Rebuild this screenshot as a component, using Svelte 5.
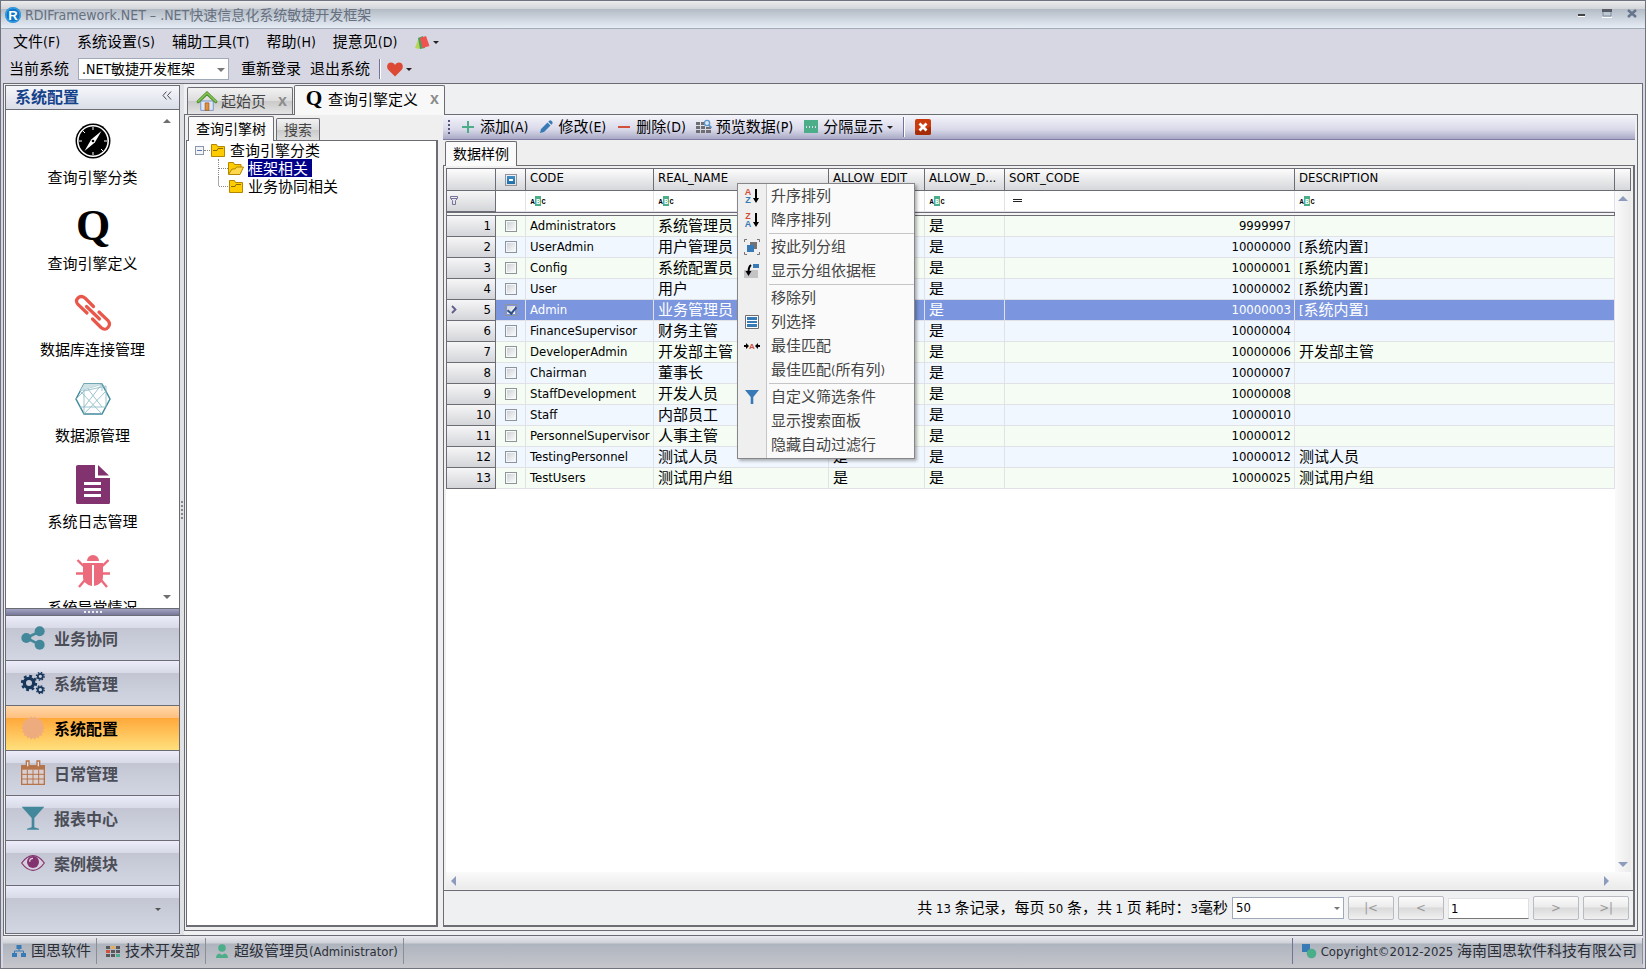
<script>
  const menus = ["文件(F)", "系统设置(S)", "辅助工具(T)", "帮助(H)", "提意见(D)"];

  const shortcuts = [
    { icon: "compass", label: "查询引擎分类" },
    { icon: "q", label: "查询引擎定义" },
    { icon: "link", label: "数据库连接管理" },
    { icon: "hexagon", label: "数据源管理" },
    { icon: "file", label: "系统日志管理" },
    { icon: "bug", label: "系统异常情况" }
  ];

  const modules = [
    { icon: "share", label: "业务协同" },
    { icon: "gears", label: "系统管理" },
    { icon: "badge", label: "系统配置" },
    { icon: "calendar", label: "日常管理" },
    { icon: "glass", label: "报表中心" },
    { icon: "eye", label: "案例模块" }
  ];

  const actions = [
    { icon: "plus", label: "添加(A)" },
    { icon: "pencil", label: "修改(E)" },
    { icon: "minus", label: "删除(D)" },
    { icon: "preview", label: "预览数据(P)" },
    { icon: "split", label: "分隔显示", caret: true }
  ];

  // no width: the column takes what is left
  const columns = [
    { label: "CODE", width: 128, filter: "abc" },
    { label: "REAL_NAME", width: 175, filter: "abc" },
    { label: "ALLOW_EDIT", width: 96, filter: "abc" },
    { label: "ALLOW_D...", width: 80, filter: "abc" },
    { label: "SORT_CODE", width: 290, filter: "eq" },
    { label: "DESCRIPTION", filter: "abc" }
  ];

  const rows = [
    ["Administrators", "系统管理员", "是", "是", "9999997", ""],
    ["UserAdmin", "用户管理员", "是", "是", "10000000", "[系统内置]"],
    ["Config", "系统配置员", "是", "是", "10000001", "[系统内置]"],
    ["User", "用户", "是", "是", "10000002", "[系统内置]"],
    ["Admin", "业务管理员", "是", "是", "10000003", "[系统内置]"],
    ["FinanceSupervisor", "财务主管", "是", "是", "10000004", ""],
    ["DeveloperAdmin", "开发部主管", "是", "是", "10000006", "开发部主管"],
    ["Chairman", "董事长", "是", "是", "10000007", ""],
    ["StaffDevelopment", "开发人员", "是", "是", "10000008", ""],
    ["Staff", "内部员工", "是", "是", "10000010", ""],
    ["PersonnelSupervisor", "人事主管", "是", "是", "10000012", ""],
    ["TestingPersonnel", "测试人员", "是", "是", "10000012", "测试人员"],
    ["TestUsers", "测试用户组", "是", "是", "10000025", "测试用户组"]
  ];

  const menuGroups = [
    [{ icon: "az", label: "升序排列" }, { icon: "za", label: "降序排列" }],
    [{ icon: "group", label: "按此列分组" }, { icon: "groupbox", label: "显示分组依据框" }],
    [
      { label: "移除列" },
      { icon: "columns", label: "列选择" },
      { icon: "fit", label: "最佳匹配" },
      { label: "最佳匹配(所有列)" }
    ],
    [{ icon: "funnel", label: "自定义筛选条件" }, { label: "显示搜索面板" }, { label: "隐藏自动过滤行" }]
  ];

  let activeModule = $state(2);
  let current = $state(4);
  let checked = $state(rows.map((r, i) => i === 4));

  // Chinese runs are set larger than the Latin ones
  const runs = (s) => s.split(/([\u3000-\u9fff\uff00-\uffef]+)/).filter(Boolean);
  const isHan = (s) => /[\u3000-\u9fff\uff00-\uffef]/.test(s);

  // zigzag outline of the badge icon
  const star = Array.from({ length: 36 }, (_, i) => {
    const r = i % 2 ? 14.5 : 18;
    const a = (i * Math.PI) / 18;
    return `${(18 + r * Math.cos(a)).toFixed(1)},${(18 + r * Math.sin(a)).toFixed(1)}`;
  }).join(" ");
</script>

{#snippet text(s)}{#each runs(s) as r}{#if isHan(r)}<span class="han">{r}</span>{:else}{r}{/if}{/each}{/snippet}

{#snippet icon(name, size = 16)}
  <svg class="icon" width={size} height={size} viewBox={size > 16 ? "0 0 36 36" : "0 0 16 16"} aria-hidden="true">
    {#if name === "logo"}
      <circle cx="8" cy="8" r="8" fill="#1488d8" />
      <circle cx="8" cy="8" r="7" fill="#0f76c8" stroke="#5cc0f5" stroke-width=".6" />
      <text x="8" y="12.500" class="bold" font-size="13" text-anchor="middle" fill="#fff">R</text>
    {:else if name === "cards"}
      <path d="M1 14 5 3l5 10-4 2z" fill="#b8d653" />
      <path d="M4 4 9 2l2 12-5 1z" fill="#4b9e5e" />
      <path d="m6 4 6-2 3.500 10-7 2z" fill="#ef5350" />
    {:else if name === "heart"}
      <path d="M8 15.500 1 8.500C-1 5 .8 1.500 4 1.500 6 1.500 7.300 2.600 8 4c.7-1.400 2-2.500 4-2.500 3.200 0 5 3.500 3 7z" fill="#dc4a35" />
    {:else if name === "home"}
      <path d="M3 8h10v7.500H3z" fill="#dde6f6" stroke="#7b97cc" stroke-width=".8" />
      <path d="M6.500 9.500h3v6h-3z" fill="#e0903c" stroke="#a35a16" stroke-width=".6" />
      <path d="M1 8.500 8 1.800l7 6.700" fill="none" stroke="#4d8a2c" stroke-width="2.600" stroke-linecap="round" />
      <path d="M1 8.300 8 1.600l7 6.700" fill="none" stroke="#86c653" stroke-width="1.200" stroke-linecap="round" />
    {:else if name === "q"}
      <text x={size > 16 ? 18 : 8} y={size > 16 ? 31 : 13} class="serif" font-size={size > 16 ? 44 : 17} text-anchor="middle">Q</text>
    {:else if name === "compass"}
      <circle cx="18" cy="18" r="17.500" />
      <circle cx="18" cy="18" r="15.200" fill="none" stroke="#fff" stroke-width="1.600" />
      <path d="M18 4v3M18 29v3M4 18h3M29 18h3M8 8l2 2M26 26l2 2" stroke="#fff" stroke-width="1" />
      <path d="m26.500 8-6.700 11.500L9.500 28l6.700-11.500z" fill="#fff" />
      <circle cx="18" cy="18" r="1.300" />
    {:else if name === "link"}
      <g fill="none" stroke="#e8574a" stroke-width="3.200" stroke-linecap="round">
        <path d="m12 18-9-8.500Q0 6 3 3t7 0l8.500 8.500" />
        <path d="m24 17 9 8.500q3 3.500 0 7t-7 0L17.500 24" />
        <path d="m11.500 11.500 13 12.500" />
      </g>
    {:else if name === "hexagon"}
      <path d="M1 18 9 3h18l8 15-8 15H9z" fill="none" stroke="#438b9c" stroke-width="1.500" />
      <path d="M9 3 27 26M27 3 9 26M5 10l22 23M31 10 9 33M9 3v30M27 3 5 10M9 10l22-5M31 5v21M5 26h26M1 18 9 10M27 3v7" fill="none" stroke="#86b6c1" stroke-width=".8" />
      <path d="M9 3h18L5 10z" fill="#cfe2e6" />
    {:else if name === "file"}
      <path d="M3-2h17v13h15v24.500q0 1.500-1.500 1.500h-31Q1 37 1 35.500v-36Q1-2 3-2" fill="#82336f" />
      <path d="M23-2V8.500h11z" fill="#82336f" />
      <path d="M9 15h17v3H9zM9 21h17v3H9zM9 27h17v3H9z" fill="#fff" />
    {:else if name === "bug"}
      <path d="M12 8a6 6 0 0 1 12 0z" fill="#eb6a7c" />
      <path d="M8 10h20v14c0 5-4 8-9 9V12h-2v21c-5-1-9-4-9-9z" fill="#eb6a7c" />
      <path d="m2.500 7 6 6M33.500 7l-6 6M1 20.500h7M35 20.500h-7M4 34l5.500-6.500M32 34l-5.500-6.500" stroke="#eb6a7c" stroke-width="2.400" />
    {:else if name === "share"}
      <path d="M28 8 8 18l20 10" fill="none" stroke="#43889a" stroke-width="4" />
      <circle cx="28" cy="8" r="7.500" fill="#43889a" />
      <circle cx="8" cy="18" r="7.500" fill="#43889a" />
      <circle cx="28" cy="28" r="7.500" fill="#43889a" />
    {:else if name === "gears"}
      <g fill="none" stroke="#16365c">
        <circle cx="12" cy="18" r="7" stroke-width="5" />
        <circle cx="12" cy="18" r="10.500" stroke-width="3.500" stroke-dasharray="4.200 4.050" />
        <circle cx="29" cy="8" r="3.800" stroke-width="2.600" />
        <circle cx="29" cy="8" r="5.800" stroke-width="2" stroke-dasharray="2.300 2.250" />
        <circle cx="29" cy="28" r="3.800" stroke-width="2.600" />
        <circle cx="29" cy="28" r="5.800" stroke-width="2" stroke-dasharray="2.300 2.250" />
      </g>
    {:else if name === "badge"}
      <polygon points={star} fill="#eeac7e" />
    {:else if name === "calendar"}
      <path d="M1 7h34v28H1z" fill="#d9cfd0" stroke="#b6744a" stroke-width="2" />
      <path d="M1 6h34v7H1z" fill="#b6744a" />
      <path d="M8 0h4v9H8zM24 0h4v9h-4z" fill="#e8e2e6" stroke="#b6744a" stroke-width="2" />
      <path d="M1 20h34M1 27h34M9.500 13v22M18 13v22M26.500 13v22" stroke="#b6744a" stroke-width="1.500" />
    {:else if name === "glass"}
      <path d="M1 1h34L20 18v14l7 2v1.500H9V34l7-2V18z" fill="#43889a" />
    {:else if name === "eye"}
      <path d="M1 18Q9 7 18 7t17 11Q27 29 18 29T1 18z" fill="#d8cfdd" stroke="#82336f" stroke-width="1.800" />
      <circle cx="18" cy="16.500" r="9" fill="#82336f" />
      <path d="M13 16q0-5 5-5" fill="none" stroke="#e3cfe0" stroke-width="2" />
    {:else if name === "plus"}
      <path d="M7 2h2v5h5v2H9v5H7V9H2V7h5z" fill="#4cae89" />
    {:else if name === "pencil"}
      <path d="m2 14 1-4 6.500-6.500 3 3L6 13zM10.300 2.700l1-1q1-.7 2 0l1 1q.7 1 0 2l-1 1z" fill="#377ab5" />
    {:else if name === "minus"}
      <path d="M2 7h12v2H2z" fill="#d1503a" />
    {:else if name === "preview"}
      <path d="M0 3h4v3H0zM5 3h4v3H5zM0 7h4v3H0zM5 7h4v3H5zM10 8h5v2h-5zM0 11h4v3H0zM5 11h4v3H5zM10 11h5v3h-5z" fill="#6d6d72" />
      <circle cx="11" cy="4" r="2.600" fill="#dfe9f5" stroke="#5b93c8" stroke-width="1.400" />
      <path d="m12.800 6 2.700 2.800" stroke="#5b93c8" stroke-width="1.800" />
    {:else if name === "split"}
      <path d="M1 1h14v6H1zM1 9h14v5H1z" fill="#4cae89" />
      <path d="M1 8h14" stroke="#4cae89" stroke-width="2" stroke-dasharray="2 1" />
    {:else if name === "close"}
      <rect width="16" height="16" rx="2" fill="#c93a0d" />
      <path d="M0 12 16 8v6q0 2-2 2H2q-2 0-2-2z" fill="#a52c04" />
      <path d="m4.500 4.500 7 7m0-7-7 7" stroke="#fff" stroke-width="2.800" />
    {:else if name === "folder"}
      <path d="M1.500 2.500h5l1 2h7v10h-13z" fill="#fc0" stroke="#b48600" />
      <path d="M3 8.500h4l1-2h5" fill="none" stroke="#8f6c00" />
    {:else if name === "folder-open"}
      <path d="M.5 14V2.500h5l1 2H13V7" fill="#fc0" stroke="#b48600" />
      <path d="M.5 14.500 4 9h3l1.500-2H15.500L12 14.500z" fill="#ffd84d" stroke="#b48600" />
    {:else if name === "az" || name === "za"}
      <text x="4" y="7" class="bold" font-size="9" text-anchor="middle" fill="#d1503a">{name === "az" ? "A" : "Z"}</text>
      <text x="4" y="15" class="bold" font-size="9" text-anchor="middle" fill="#377ab5">{name === "az" ? "Z" : "A"}</text>
      <path d="M11 1h2v9h2l-3 5-3-5h2z" />
    {:else if name === "group"}
      <path d="M3 .5H.5V3M13 .5h2.500V3M3 15.500H.5V13M13 15.500h2.500V13" fill="none" stroke="#727277" />
      <path d="M6 3h7v7H6z" fill="#727277" />
      <path d="M3 6h7v7H3z" fill="#377ab5" />
    {:else if name === "groupbox"}
      <path d="M0 7h14v8H0z" fill="#c4c4c6" />
      <path d="M9 1h6v4H9z" fill="#377ab5" />
      <path d="M7 2Q4.500 4 4.500 9" fill="none" stroke="#000" stroke-width="2" />
      <path d="M1.500 8h6l-3 5z" />
    {:else if name === "columns"}
      <path d="M1.500 1.500h13v13h-13z" fill="#fff" stroke="#6d6d72" />
      <path d="M3 3h10v3H3zM3 7h10v2H3zM3 10h10v3H3z" fill="#377ab5" />
    {:else if name === "fit"}
      <text x="8" y="11" class="bold" font-size="8" text-anchor="middle" fill="#d1503a">A</text>
      <path d="M0 7h2V5l3 3-3 3V9H0zM16 7h-2V5l-3 3 3 3V9h2z" />
    {:else if name === "funnel"}
      <path d="M1 1h14L9.300 8v7H6.700V8z" fill="#377ab5" />
    {:else if name === "filter"}
      <path d="M3.500 3.500h7v2l-2 2v4h-3v-4l-2-2zM4 5.500h6" fill="none" stroke="#77739b" />
    {:else if name === "abc"}
      <path d="M5 3h6v10H5z" fill="#4cae89" />
      <text x="2.500" y="10.500" class="mono" font-size="7" text-anchor="middle">A</text>
      <text x="8" y="10.500" class="mono" font-size="7" text-anchor="middle" fill="#fff">B</text>
      <text x="13.500" y="10.500" class="mono" font-size="7" text-anchor="middle">C</text>
    {:else if name === "eq"}
      <path d="M4 6h9v1H4zM4 8h9v1H4z" fill="#222" />
    {:else if name === "org"}
      <path d="M5.500 2h5v4h-5zM1 10h5v4H1zM10 10h5v4h-5z" fill="#377ab5" />
      <path d="M8 6v2M3.500 10V8h9v2" fill="none" stroke="#377ab5" />
    {:else if name === "tiles"}
      <path d="M1 3h4v3H1zM11 3h4v3h-4zM6 7h4v3H6zM11 7h4v3h-4zM1 11h4v3H1zM6 11h4v3H6z" fill="#57575c" />
      <path d="M6 3h4v3H6z" fill="#e9ad53" />
      <path d="M1 7h4v3H1z" fill="#d1503a" />
      <path d="M11 11h4v3h-4z" fill="#4cae89" />
    {:else if name === "user"}
      <circle cx="8" cy="5" r="3.800" fill="#4cae89" />
      <path d="M2 15q0-4 3.500-4.500L8 12l2.500-1.500Q14 11 14 15z" fill="#4cae89" />
    {:else if name === "mark"}
      <path d="M1 1h8v8H1z" fill="#377ab5" />
      <circle cx="10.500" cy="10.500" r="4.800" fill="#4cae89" />
    {/if}
  </svg>
{/snippet}

<div class="window">
  <header class="titlebar">
    {@render icon("logo")}
    <h1>{@render text("RDIFramework.NET – .NET快速信息化系统敏捷开发框架")}</h1>
    <div class="window-buttons">
      <button aria-label="最小化"><svg width="10" height="10"><path d="M1 5h7v2H1z" fill="#444" /><path d="M1 7h7v1H1z" fill="#fff" /></svg></button>
      <button aria-label="最大化"><svg width="10" height="10"><path d="M1 1h8v6H1z" fill="none" stroke="#7d8ca3" /><path d="M0 0h10v3H0z" fill="#555a66" /><path d="M0 8h10v1H0z" fill="#fff" /></svg></button>
      <button aria-label="关闭"><svg width="10" height="10"><path d="m1 1 8 7m0-7-8 7" stroke="#66748c" stroke-width="2.500" /></svg></button>
    </div>
  </header>

  <nav class="menubar">
    {#each menus as m}
      <button>{@render text(m)}</button>
    {/each}
    <button class="drop" aria-label="皮肤">{@render icon("cards")}<i class="caret"></i></button>
  </nav>

  <div class="mainbar">
    <label for="system">{@render text("当前系统")}</label>
    <div class="combo system">
      <select id="system"><option>.NET敏捷开发框架</option></select>
    </div>
    <button>{@render text("重新登录")}</button>
    <button>{@render text("退出系统")}</button>
    <div class="extras">
      <span class="rule"></span>
      <button class="drop" aria-label="收藏">{@render icon("heart")}<i class="caret"></i></button>
    </div>
  </div>

  <div class="work">
    <aside class="sidebar">
      <div class="side-head">
        <h2>系统配置</h2>
        <button aria-label="折叠">
          <svg width="10" height="9"><path d="M4.500 .5 1 4.500l3.500 4M9 .5 5.500 4.500 9 8.500" fill="none" stroke="#4a4a55" /></svg>
        </button>
      </div>
      <div class="shortcuts">
        {#each shortcuts as s}
          <button class="shortcut">
            {@render icon(s.icon, 36)}
            <span class="han">{s.label}</span>
          </button>
        {/each}
        <button class="scroll-up" aria-label="向上滚动"><i class="tri up"></i></button>
        <button class="scroll-down" aria-label="向下滚动"><i class="tri down"></i></button>
      </div>
      <div class="side-grip"><i></i><i></i><i></i><i></i><i></i></div>
      {#each modules as m, i}
        <button class="module" class:active={i === activeModule} onclick={() => (activeModule = i)}>
          {@render icon(m.icon, 24)}
          {m.label}
        </button>
      {/each}
      <div class="side-foot"><button aria-label="配置按钮"><i class="caret"></i></button></div>
    </aside>

    <div class="splitter"><i></i><i></i><i></i><i></i><i></i></div>

    <main class="documents">
      <div class="tabs">
        <div class="tab">{@render icon("home", 16)}<span class="han">起始页</span><button aria-label="关闭起始页">x</button></div>
        <div class="tab active">{@render icon("q", 16)}<span class="han">查询引擎定义</span><button aria-label="关闭查询引擎定义">x</button></div>
      </div>

      <div class="pane">
        <section class="tree-side">
          <div class="subtabs">
            <button class="active">查询引擎树</button>
            <button>搜索</button>
          </div>
          <ul class="tree">
            <li>
              <div class="node"><button class="expander" aria-label="折叠"></button><i class="stub"></i>{@render icon("folder")}<span class="han">查询引擎分类</span></div>
              <ul>
                <li class="node"><i class="stub"></i>{@render icon("folder-open")}<span class="han selected">框架相关</span></li>
                <li class="node"><i class="stub"></i>{@render icon("folder")}<span class="han">业务协同相关</span></li>
              </ul>
            </li>
          </ul>
        </section>

        <section class="data-side">
          <div class="toolbar">
            <span class="grip"></span>
            {#each actions as a}
              <button>{@render icon(a.icon)}<span>{@render text(a.label)}</span>{#if a.caret}<i class="caret"></i>{/if}</button>
            {/each}
            <span class="rule"></span>
            <button aria-label="关闭">{@render icon("close")}</button>
          </div>
          <div class="subtabs"><button class="active">数据样例</button></div>

          <div class="frame">
            <div class="grid">
              <div class="table-wrap">
                <table>
                  <colgroup>
                    <col class="col-num" />
                    <col class="col-check" />
                    {#each columns as c}
                      <col style={c.width ? `width: ${c.width}px` : ""} />
                    {/each}
                  </colgroup>
                  <thead>
                    <tr>
                      <th></th>
                      <th class="check"><input type="checkbox" class="all" aria-label="全选" /></th>
                      {#each columns as c}
                        <th>{c.label}</th>
                      {/each}
                    </tr>
                    <tr class="filters">
                      <td class="num">{@render icon("filter")}</td>
                      <td></td>
                      {#each columns as c}
                        <td>{@render icon(c.filter)}</td>
                      {/each}
                    </tr>
                    <tr class="divider"><td colspan="8"></td></tr>
                  </thead>
                  <tbody>
                    {#each rows as row, i}
                      <tr class:current={i === current} onclick={() => (current = i)}>
                        <td class="num">
                          {#if i === current}<svg width="6" height="9"><path d="m1 1 3.500 3.500L1 8" fill="none" stroke="#5f5b8a" stroke-width="1.800" /></svg>{/if}{i + 1}
                        </td>
                        <td class="check"><input type="checkbox" bind:checked={checked[i]} aria-label={row[0]} /></td>
                        {#each row as cell, j}
                          <td class:right={j === 4}>{@render text(cell)}</td>
                        {/each}
                      </tr>
                    {/each}
                  </tbody>
                </table>

                <div class="context-menu" role="menu">
                  {#each menuGroups as group, g}
                    {#if g > 0}<div class="sep"></div>{/if}
                    {#each group as item}
                      <button role="menuitem">
                        <span class="slot">{#if item.icon}{@render icon(item.icon)}{/if}</span>
                        <span>{@render text(item.label)}</span>
                      </button>
                    {/each}
                  {/each}
                </div>
              </div>
              <div class="vscroll">
                <span class="cap"></span>
                <div class="track"><i class="tri up"></i><i class="tri down"></i></div>
              </div>
            </div>
            <div class="hscroll"><i class="tri left"></i><i class="tri right-arrow"></i></div>

            <div class="pager">
              <label for="page-size">{@render text("共 13 条记录，每页 50 条，共 1 页 耗时：3毫秒")}</label>
              <div class="combo size">
                <select id="page-size"><option>50</option></select>
              </div>
              <button>|&lt;</button>
              <button>&lt;</button>
              <input type="text" value="1" aria-label="页码" />
              <button>&gt;</button>
              <button>&gt;|</button>
            </div>
          </div>
        </section>
      </div>
    </main>
  </div>

  <footer class="statusbar">
    <span class="status">{@render icon("org")}<span>{@render text("国思软件")}</span></span>
    <span class="status">{@render icon("tiles")}<span>{@render text("技术开发部")}</span></span>
    <span class="status">{@render icon("user")}<span>{@render text("超级管理员(Administrator)")}</span></span>
    <span class="status copyright">{@render icon("mark")}<span>{@render text("Copyright©2012-2025 海南国思软件科技有限公司")}</span></span>
  </footer>
</div>

<style>
  :global(body) {
    margin: 0;
  }

  .window {
    --line: #6b6c74;
    --ui: "DejaVu Sans Condensed", "Noto Sans CJK SC", sans-serif;
    box-sizing: border-box;
    height: 100vh;
    display: flex;
    flex-direction: column;
    border: 1px solid #6f7380;
    background: #d7d7e4;
    font: 13px/20px var(--ui);
    color: #000;
    overflow: hidden;
  }

  .window :global(*) {
    box-sizing: border-box;
  }

  button {
    font: inherit;
    color: inherit;
    margin: 0;
    padding: 0;
    border: 0;
    background: none;
    white-space: nowrap;
  }

  .han {
    font: 15px/18px "Noto Sans CJK SC", sans-serif;
  }

  .icon {
    flex: none;
    display: block;
    overflow: visible;
  }

  .bold {
    font-family: "Liberation Sans", sans-serif;
    font-weight: bold;
  }

  .mono {
    font-family: "Liberation Mono", monospace;
    font-weight: bold;
  }

  .serif {
    font-family: "Liberation Serif", serif;
    font-weight: bold;
  }

  .caret {
    width: 0;
    border: 3px solid transparent;
    border-top-color: #222;
    border-bottom: 0;
  }

  .tri {
    width: 0;
    height: 0;
    border: 5px solid transparent;
  }

  .tri.up {
    border-top: 0;
    border-bottom-color: #8d9cbd;
  }

  .tri.down {
    border-bottom: 0;
    border-top-color: #8d9cbd;
  }

  .tri.left {
    border-left: 0;
    border-right-color: #8d9cbd;
  }

  .tri.right-arrow {
    border-right: 0;
    border-left-color: #8d9cbd;
  }

  .rule {
    width: 2px;
    height: 20px;
    border-left: 1px solid #73739a;
    border-right: 1px solid #fff;
  }

  /* title and menus */
  .titlebar {
    flex: none;
    height: 28px;
    display: flex;
    align-items: center;
    gap: 4px;
    padding: 0 8px 0 4px;
    border-bottom: 1px solid #a3abb8;
    background: linear-gradient(#ececee, #d2d4d8 8px, #b3bbc6 8px, #e6edf5);
  }

  h1 {
    flex: 1;
    margin: 0;
    font-size: 14px;
    font-weight: normal;
    color: #66707f;
  }

  h1 .han {
    font-size: 14px;
  }

  .window-buttons {
    display: flex;
    gap: 15px;
  }

  .menubar {
    flex: none;
    height: 26px;
    display: flex;
    align-items: center;
    gap: 17px;
    padding-left: 12px;
    font-size: 14px;
  }

  .drop {
    display: flex;
    align-items: center;
    gap: 3px;
  }

  .mainbar {
    flex: none;
    height: 28px;
    display: flex;
    align-items: center;
    gap: 9px;
    padding-left: 8px;
  }

  .extras {
    display: flex;
    align-items: center;
    gap: 6px;
  }

  .combo {
    position: relative;
  }

  .combo::after {
    content: "";
    position: absolute;
    right: 4px;
    top: 10px;
    border: 4px solid transparent;
    border-top-color: #777;
    border-bottom: 0;
    pointer-events: none;
  }

  select {
    appearance: none;
    width: 100%;
    height: 22px;
    padding: 0 3px;
    border: 1px solid #a0a9b8;
    border-radius: 0;
    background: #fff;
    color: #000;
    font: 13px/20px var(--ui);
  }

  .system {
    width: 151px;
    margin-right: 3px;
  }

  .system select {
    font-size: 14px;
  }

  /* left side */
  .work {
    flex: 1;
    min-height: 0;
    display: flex;
    margin: 0 2px;
    border: 1px solid var(--line);
    background: #eff0f2;
  }

  .sidebar {
    flex: none;
    width: 175px;
    display: flex;
    flex-direction: column;
    margin: 1px 0 1px 1px;
    border: 1px solid var(--line);
    background: #fff;
  }

  .side-head {
    flex: none;
    height: 24px;
    display: flex;
    align-items: center;
    justify-content: space-between;
    padding: 0 7px 3px 9px;
    border-bottom: 1px solid var(--line);
    background: linear-gradient(#f6f7fb, #dadee8);
  }

  h2 {
    margin: 0;
    font: bold 16px/20px "Noto Sans CJK SC", sans-serif;
    color: #15428b;
  }

  .shortcuts {
    position: relative;
    flex: 1;
    min-height: 0;
    overflow: hidden;
    padding-top: 13px;
  }

  .shortcut {
    width: 100%;
    height: 86px;
    display: flex;
    flex-direction: column;
    align-items: center;
    gap: 9px;
  }

  .scroll-up,
  .scroll-down {
    position: absolute;
    right: 8px;
    display: flex;
  }

  .scroll-up {
    top: 9px;
  }

  .scroll-down {
    bottom: 9px;
  }

  .shortcuts .tri {
    border-width: 4px;
  }

  .shortcuts .up {
    border-top: 0;
    border-bottom-color: #6d6d72;
  }

  .shortcuts .down {
    border-bottom: 0;
    border-top-color: #6d6d72;
  }

  .side-grip {
    flex: none;
    height: 7px;
    display: flex;
    align-items: center;
    justify-content: center;
    gap: 2px;
    border-top: 1px solid var(--line);
    background: linear-gradient(#a3a3c2, #77779b);
  }

  .side-grip i {
    width: 2px;
    height: 2px;
    background: #eee;
  }

  .module,
  .side-foot {
    flex: none;
    height: 45px;
    display: flex;
    align-items: center;
    gap: 9px;
    padding-left: 15px;
    border-top: 1px solid var(--line);
    background: linear-gradient(#ececfa, #d8dae7 12px, #c3c5d2 12px, #d2d6e3);
    font: bold 16px/20px "Noto Sans CJK SC", sans-serif;
    color: #4b4d57;
  }

  .module.active {
    background: linear-gradient(#ffd7a6, #ffc080 12px, #ffa83a 12px, #ffe07c);
    color: #000;
  }

  .side-foot {
    height: 48px;
    justify-content: flex-end;
    padding-right: 18px;
  }

  .side-foot button {
    display: flex;
  }

  .side-foot .caret {
    border-top-color: #555;
  }

  .splitter {
    flex: none;
    width: 4px;
    display: flex;
    flex-direction: column;
    align-items: center;
    justify-content: center;
    gap: 2px;
    background: #e1e2e6;
  }

  .splitter i {
    width: 2px;
    height: 2px;
    background: #888;
  }

  /* documents */
  .documents {
    flex: 1;
    min-width: 0;
    display: flex;
    flex-direction: column;
    padding: 0 4px 4px 0;
  }

  .tabs {
    flex: none;
    height: 30px;
    display: flex;
    align-items: flex-end;
    gap: 1px;
    padding-left: 3px;
  }

  .tab {
    height: 27px;
    display: flex;
    align-items: center;
    gap: 4px;
    padding: 0 5px 1px 9px;
    border: 1px solid var(--line);
    border-bottom: 0;
    border-radius: 2px 2px 0 0;
    background: linear-gradient(#f2f2f2, #dcdcdc 50%, #c9c9c9 50%, #e4e4e4);
    color: #444;
  }

  .tab .icon {
    width: 20px;
    height: 20px;
  }

  .tab button {
    margin-left: 8px;
    font: bold 16px/16px "Liberation Sans", sans-serif;
    color: #8c8c8c;
  }

  .tab.active {
    position: relative;
    height: 30px;
    margin-bottom: -1px;
    padding-bottom: 3px;
    background: #f8f8f9;
    color: #000;
  }

  .pane {
    flex: 1;
    min-height: 0;
    display: flex;
    gap: 5px;
    padding: 0 2px 3px 1px;
    border: 1px solid var(--line);
    background: #efefef;
  }

  .tree-side {
    flex: none;
    width: 252px;
    display: flex;
    flex-direction: column;
  }

  .subtabs {
    flex: none;
    height: 25px;
    display: flex;
    align-items: flex-end;
    gap: 2px;
    padding-left: 2px;
  }

  .subtabs button {
    height: 22px;
    padding: 0 7px 2px;
    border: 1px solid var(--line);
    border-bottom: 0;
    border-radius: 2px 2px 0 0;
    background: linear-gradient(#f2f2f2, #dcdcdc 50%, #c9c9c9 50%, #e0e0e0);
    font: 14px/18px "Noto Sans CJK SC", sans-serif;
    color: #444;
  }

  .subtabs .active {
    position: relative;
    height: 25px;
    margin-bottom: -1px;
    padding-bottom: 3px;
    background: #fafafa;
    color: #000;
  }

  .tree,
  .tree ul {
    margin: 0;
    padding: 0;
    list-style: none;
  }

  .tree {
    flex: 1;
    padding: 0 0 0 8px;
    border: 1px solid var(--line);
    border-width: 1px 2px 2px 1px;
    background: #fff;
  }

  .node {
    height: 18px;
    display: flex;
    align-items: center;
  }

  .node .icon {
    margin-right: 4px;
  }

  .expander {
    width: 9px;
    height: 9px;
    border: 1px solid #8a96ab;
    background: linear-gradient(#5a78b8, #5a78b8) center / 5px 1px no-repeat #f4f4f4;
  }

  .stub {
    width: 6px;
    border-top: 1px dotted #888;
  }

  .tree ul {
    padding-left: 23px;
  }

  .tree ul .node {
    border-left: 1px dotted #888;
  }

  .tree ul .node:last-child {
    border-image: linear-gradient(#aaa 50%, transparent 50%) 1;
  }

  .tree ul .stub {
    width: 9px;
  }

  .selected {
    padding-right: 4px;
    background: #00008b;
    color: #fff;
  }

  .data-side {
    flex: 1;
    min-width: 0;
    display: flex;
    flex-direction: column;
  }

  .toolbar {
    flex: none;
    height: 25px;
    display: flex;
    align-items: center;
    gap: 10px;
    padding-left: 5px;
    border-bottom: 1px solid #7f7fa5;
    background: linear-gradient(#f5f5fb, #d9d9ea 60%, #a9a9c6);
    font-size: 14px;
  }

  .toolbar button {
    display: flex;
    align-items: center;
    gap: 4px;
  }

  .grip {
    width: 2px;
    height: 14px;
    background: repeating-linear-gradient(#55557d 0 2px, transparent 2px 4px);
  }

  .frame {
    flex: 1;
    min-height: 0;
    display: flex;
    flex-direction: column;
    padding: 2px 2px 0;
    border: 1px solid var(--line);
    border-width: 1px 2px 2px 1px;
    background: #f0f0f1;
  }

  .grid {
    flex: 1;
    min-height: 0;
    display: flex;
  }

  .table-wrap {
    position: relative;
    flex: 1;
    min-width: 0;
    background: #fff;
  }

  table {
    width: 100%;
    table-layout: fixed;
    border-collapse: separate;
    border-spacing: 0;
  }

  .col-num {
    width: 50px;
  }

  .col-check {
    width: 30px;
  }

  th,
  td {
    height: 21px;
    padding: 0 4px;
    border-right: 1px solid #e0e2e8;
    border-bottom: 1px solid #e0e2e8;
    line-height: 18px;
    text-align: left;
    white-space: nowrap;
  }

  th {
    height: 23px;
    padding-bottom: 3px;
    border: 1px solid var(--line);
    border-left-width: 0;
    background: linear-gradient(#fcfcfc, #d6d7db);
    font-weight: normal;
  }

  th:first-child,
  .num {
    border-left: 1px solid var(--line);
  }

  .num {
    border-right-color: var(--line);
    border-bottom-color: var(--line);
    background: linear-gradient(#f6f6f7, #d4d5d9);
    text-align: right;
  }

  .num svg {
    float: left;
  }

  tbody .num svg {
    margin-top: 4px;
  }

  .filters .num {
    padding-left: 0;
  }

  .divider td {
    height: 4px;
    padding: 0;
    border: 1px solid var(--line);
    background: #f4f4f4;
  }

  tbody td {
    background: #f0f7ff;
  }

  tbody tr:nth-child(odd) td {
    background: #f4fcf3;
  }

  tbody tr.current td {
    background: #7b96de;
    color: #fff;
  }

  tbody tr:nth-child(n) td.num {
    background: linear-gradient(#f6f6f7, #d4d5d9);
    color: #000;
  }

  td.right {
    text-align: right;
    padding-right: 3px;
  }

  .check {
    padding: 0;
    text-align: center;
  }

  .check input {
    appearance: none;
    display: block;
    width: 12px;
    height: 12px;
    margin: 0 auto;
    border: 1px solid #8f939b;
    background: linear-gradient(135deg, #cfd1d6, #fafafa) content-box #fff;
    padding: 1px;
  }

  .check input:checked {
    position: relative;
  }

  .check input:checked::after {
    content: "";
    position: absolute;
    left: 3px;
    top: 0;
    width: 4px;
    height: 7px;
    border: solid #2f4e86;
    border-width: 0 2px 2px 0;
    transform: rotate(40deg);
  }

  .check .all {
    background: linear-gradient(#fff, #fff) center / 4px 2px no-repeat, linear-gradient(#3f8fc4, #1d6fa8) content-box #fff;
  }

  .vscroll {
    flex: none;
    width: 16px;
    display: flex;
    flex-direction: column;
  }

  .cap {
    flex: none;
    height: 23px;
    border: 1px solid var(--line);
    border-left: 0;
    background: linear-gradient(#fcfcfc, #d6d7db);
  }

  .track {
    flex: 1;
    display: flex;
    flex-direction: column;
    align-items: center;
    justify-content: space-between;
    padding: 5px 0;
    background: linear-gradient(90deg, #fafafa, #ebebeb);
  }

  .hscroll {
    flex: none;
    height: 17px;
    display: flex;
    align-items: center;
    justify-content: space-between;
    padding: 0 22px 0 5px;
    background: linear-gradient(#fafafa, #ebebeb);
  }

  .pager {
    flex: none;
    height: 35px;
    display: flex;
    align-items: center;
    justify-content: flex-end;
    gap: 4px;
    margin: 1px -2px 0;
    padding-right: 4px;
    border-top: 1px solid var(--line);
    background: #eff0f2;
  }

  .pager .size {
    width: 112px;
  }

  .size::after {
    border-width: 3px;
    border-bottom: 0;
  }

  .pager button {
    width: 46px;
    height: 24px;
    border: 1px solid #b9bbc0;
    border-radius: 2px;
    background: linear-gradient(#fbfbfb, #ececec 45%, #dadada 50%, #f0f0f0);
    color: #999;
  }

  .pager input {
    width: 81px;
    height: 21px;
    padding: 0 2px;
    border: 1px solid #e0e0e2;
    border-bottom-color: #777;
    background: #fff;
    font: inherit;
  }

  /* popup over the grid, opened from the REAL_NAME header */
  .context-menu {
    position: absolute;
    left: 291px;
    top: 15px;
    width: 178px;
    padding-bottom: 1px;
    border: 1px solid #85858a;
    background: linear-gradient(90deg, #efefef 28px, #c5c5c8 28px, #c5c5c8 29px, #fafafa 29px);
    box-shadow: 2px 2px 3px rgba(0, 0, 0, 0.3);
    color: #444;
  }

  .context-menu button {
    width: 100%;
    height: 24px;
    display: flex;
    align-items: center;
    gap: 5px;
  }

  .slot {
    width: 28px;
    display: flex;
    justify-content: center;
  }

  .context-menu .sep {
    height: 3px;
    margin-left: 31px;
    background: linear-gradient(#c5c5c8, #c5c5c8) center / 100% 1px no-repeat;
  }

  .statusbar {
    flex: none;
    height: 32px;
    display: flex;
    align-items: center;
    margin: 0 2px;
    padding-bottom: 2px;
    background: linear-gradient(#ebebf0, #cfd1d8 7px, #aeb4be 8px, #c6c6cc);
    color: #2c2f38;
  }

  .status {
    height: 26px;
    display: flex;
    align-items: center;
    gap: 4px;
    padding: 0 5px 0 8px;
    border-right: 1px solid #8c8e96;
    white-space: nowrap;
  }

  .copyright {
    margin-left: auto;
    border-left: 1px solid #73739a;
  }
</style>
